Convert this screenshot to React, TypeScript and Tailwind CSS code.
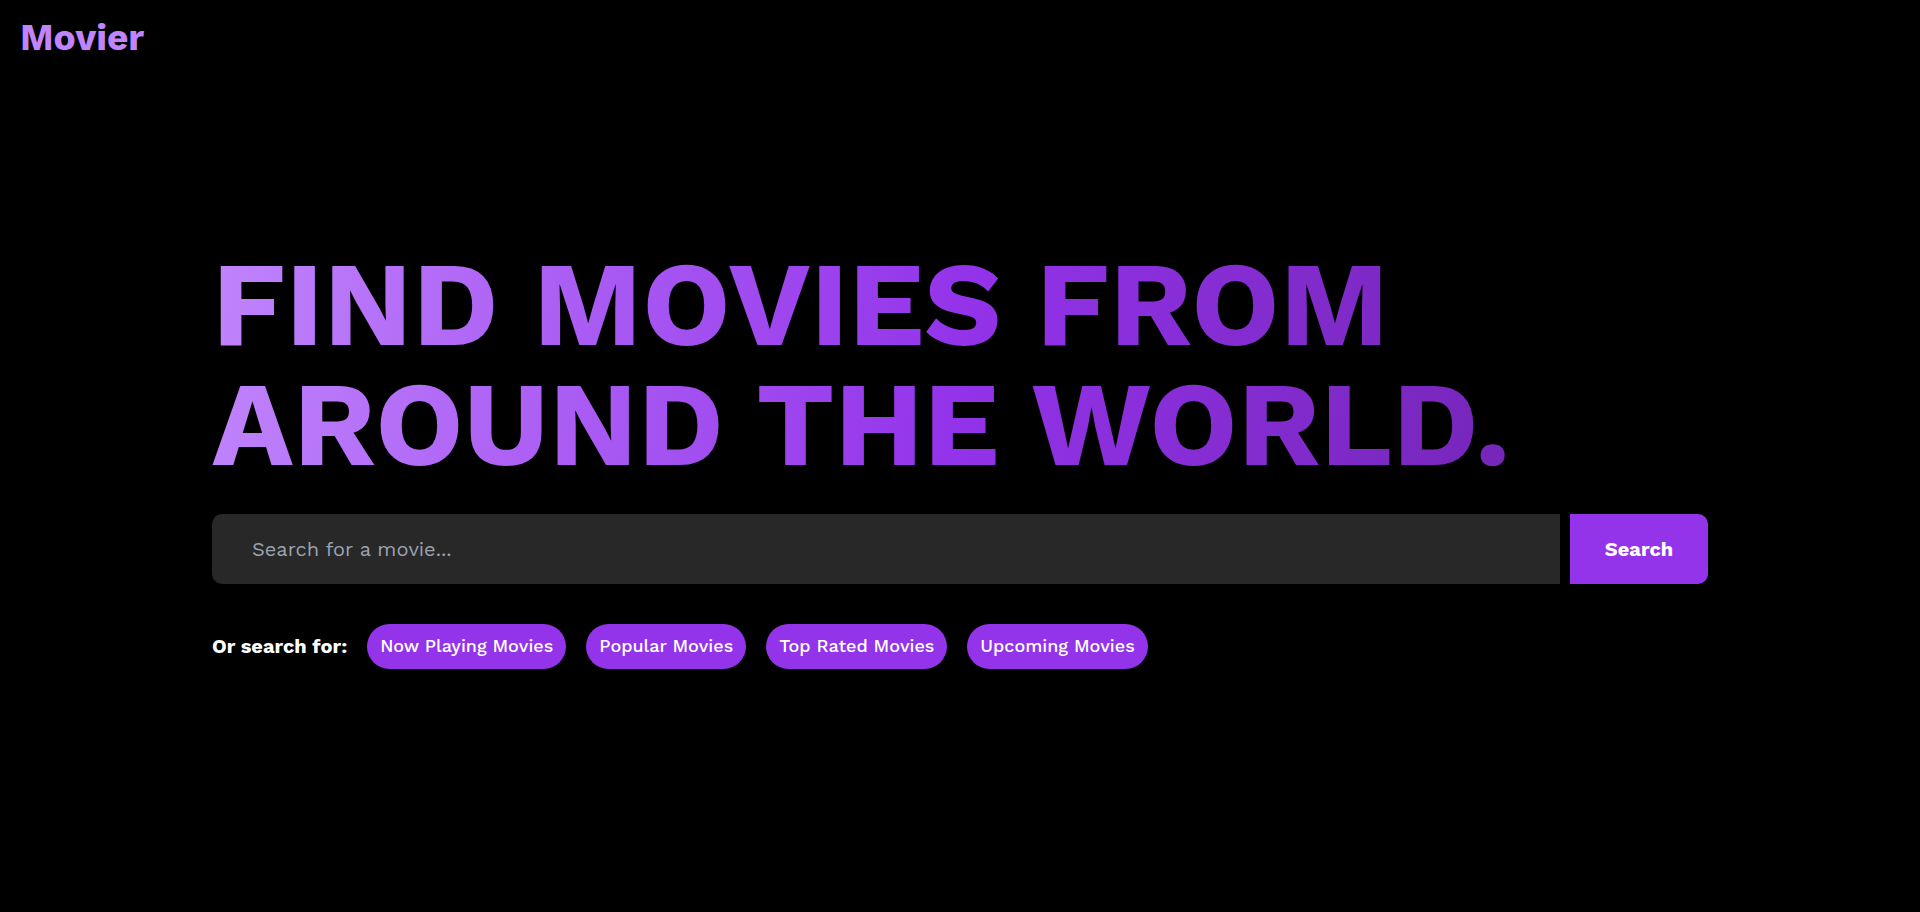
const categories = ["Now Playing Movies", "Popular Movies", "Top Rated Movies", "Upcoming Movies"];

export default function App() {
  return (
    <div className="grid min-h-screen grid-cols-1 bg-black font-['Work_Sans',Inter,sans-serif] text-white">
      <header className="col-start-1 row-start-1 self-start px-5 py-4">
        <a href="#" className="block text-[37px] leading-[44px] font-bold text-[#c084fc]">
          Movier
        </a>
      </header>
      <main className="col-start-1 row-start-1 mx-auto w-full max-w-screen-2xl self-center px-5">
        <h1 className="bg-[linear-gradient(95deg,#c084fc,#9333ea,#6b21a8)] bg-clip-text text-[120px] leading-[120px] font-bold text-transparent uppercase">
          Find movies from around the world.
        </h1>
        <form className="mt-[30px] flex gap-[10px]" onSubmit={(event) => event.preventDefault()}>
          <input
            type="search"
            aria-label="Search for a movie"
            placeholder="Search for a movie..."
            className="h-[70px] min-w-0 flex-1 rounded-l-[10px] bg-[#282828] px-10 text-xl outline-none placeholder:text-[#9ca3af]"
          />
          <button type="submit" className="h-[70px] w-[138px] rounded-r-[10px] bg-[#9333ea] text-xl font-bold">
            Search
          </button>
        </form>
        <div className="mt-10 flex flex-wrap items-center gap-5">
          <p className="text-xl font-bold">Or search for:</p>
          {categories.map((category) => (
            <button key={category} type="button" className="h-[45px] rounded-full bg-[#9333ea] px-[13px] text-lg font-medium">
              {category}
            </button>
          ))}
        </div>
      </main>
    </div>
  );
}
